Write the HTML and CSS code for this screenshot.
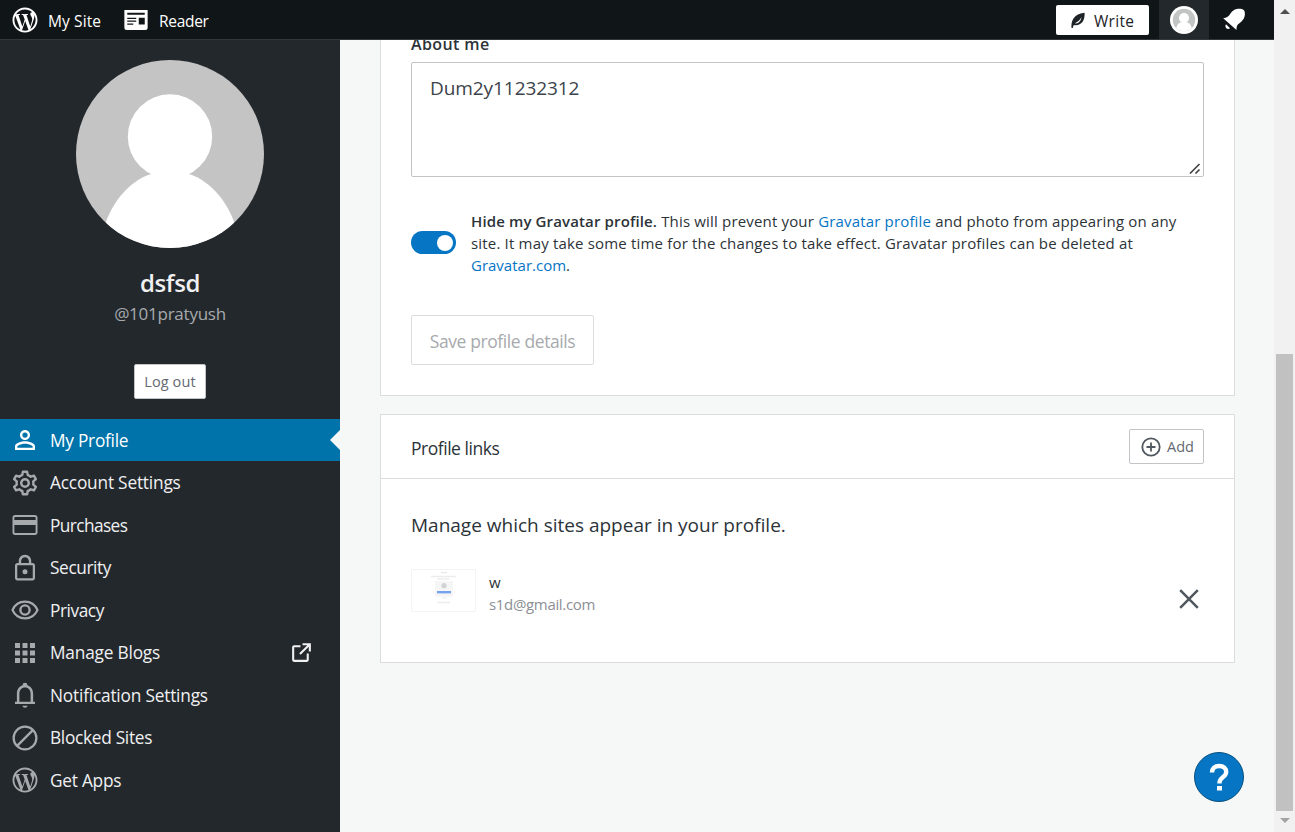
FILE: index.html
```html
<!DOCTYPE html>
<html lang="en">
<head>
<meta charset="utf-8">
<title>My Profile</title>
<link rel="stylesheet" href="styles.css">
</head>
<body>
<svg width="0" height="0" class="defs">
  <symbol id="wp" viewBox="0 0 24 24"><path d="M12 2C6.477 2 2 6.477 2 12s4.477 10 10 10 10-4.477 10-10S17.523 2 12 2zM3.500 12c0-1.232.264-2.402.736-3.459L8.291 19.650C5.456 18.272 3.500 15.365 3.500 12zm8.500 8.501c-.834 0-1.640-.123-2.400-.345l2.551-7.411 2.613 7.158c.017.042.038.080.061.117-.884.310-1.833.481-2.825.481zm1.172-12.486c.512-.027.973-.081.973-.081.458-.054.404-.727-.054-.701 0 0-1.377.108-2.266.108-.835 0-2.239-.108-2.239-.108-.459-.026-.512.674-.054.701 0 0 .434.054.892.081l1.324 3.629-1.860 5.579-3.096-9.208c.512-.027.973-.081.973-.081.458-.054.403-.727-.055-.701 0 0-1.376.108-2.265.108-.160 0-.347-.004-.547-.010C6.418 5.025 9.030 3.500 12 3.500c2.213 0 4.228.846 5.740 2.232-.037-.002-.072-.007-.110-.007-.835 0-1.427.727-1.427 1.509 0 .701.404 1.293.835 1.994.323.566.701 1.293.701 2.344 0 .727-.280 1.572-.647 2.748l-.848 2.833-3.072-9.138zm3.101 11.332l2.596-7.506c.485-1.213.646-2.182.646-3.045 0-.313-.021-.603-.057-.874.664 1.210 1.042 2.600 1.042 4.078 0 3.136-1.699 5.874-4.227 7.347z"/></symbol>
</svg>
<div class="window">
  <div class="app">
    <header class="masterbar">
      <a class="mb-item mb-site"><svg class="icon" viewBox="0 0 24 24"><use href="#wp"/></svg><span class="mb-text t-site">My Site</span></a>
      <a class="mb-item mb-reader"><svg class="icon" viewBox="0 0 24 24"><path fill-rule="evenodd" d="M2.700 4h18.600v14.300a1.700 1.700 0 0 1-1.700 1.700H4.400a1.700 1.700 0 0 1-1.700-1.700zM5 6.200v1.600h14V6.200zM5 10.200v1h7.200v-1zM5 12.400v1h7.200v-1zM5 14.700v1h4.800v-1zM14.200 10.200v5.300H19v-5.300z"/></svg><span class="mb-text t-reader">Reader</span></a>
      <div class="mb-space"></div>
      <a class="write"><svg class="quill" viewBox="0 0 14 17"><path d="M0.500 16C.1 9.500 1.800 2.200 13.600.8c.3 5.800-1.500 12.500-9.200 12.500-.9 0-1.400-.2-1.700-.3L1.700 16zM4 11.300c.8.300 2.400.1 3.600-.9 2.200-1.800 2.700-3.700 2.800-5.500-1.100 2.900-3.600 4.700-6.400 6.400z" fill-rule="evenodd"/></svg><span class="t-write">Write</span></a>
      <a class="mb-me"><svg class="me" viewBox="0 0 28 28"><circle cx="14" cy="14" r="14" fill="#fff"/><circle cx="14" cy="14" r="11.200" fill="#c3c4c4"/><circle cx="14" cy="12" r="5" fill="#fff"/><path d="M6.200 22a8 8 0 0 1 15.600 0A11.200 11.200 0 0 1 6.200 22z" fill="#fff"/></svg></a>
      <a class="mb-bell"><svg class="bell" viewBox="0 0 24 24"><path d="M1.200 10.300C5 9.700 6.500 8.500 8.500 5.500c3-4.800 7.500-5.300 11.200-4.600 1.800.4 2.500 1.200 2.900 2.700.9 4-.2 8.200-4.900 11.400-2.600 1.800-3.200 3.300-3.200 7.100zM4 16.200l4 4c-1 1.100-2.700 1-3.700 0s-1.200-2.900-.3-4z"/></svg></a>
    </header>
    <div class="layout">
      <aside class="sidebar">
        <div class="profile">
          <svg class="avatar" viewBox="0 0 188 188"><defs><clipPath id="round"><circle cx="94" cy="94" r="94"/></clipPath></defs><g clip-path="url(#round)"><path fill="#c4c4c4" d="M0 0h188v188H0z"/><circle cx="94" cy="76.500" r="42.200" fill="#fff"/><path d="M26 175c7-31 27-54 49-61h38c22 7 42 30 49 61v20H26z" fill="#fff"/></g></svg>
          <h2 class="name">dsfsd</h2>
          <div class="handle">@101pratyush</div>
          <button class="logout">Log out</button>
        </div>
        <nav class="menu">
          <a class="item active"><svg class="icon" viewBox="0 0 24 24"><path d="M12 4C9.800 4 8 5.800 8 8s1.800 4 4 4 4-1.800 4-4-1.800-4-4-4zm0 1.900a2.100 2.100 0 1 1 0 4.200 2.100 2.100 0 0 1 0-4.200zM12 13c-2.700 0-8 1.300-8 4v3h16v-3c0-2.700-5.300-4-8-4zm0 1.900c3 0 6.100 1.500 6.100 2.100v1.100H5.900V17c0-.6 3.100-2.100 6.100-2.100z"/></svg><span class="t1">My Profile</span></a>
          <a class="item"><svg class="icon line" viewBox="0 0 24 24"><path stroke-width="1.900" stroke-linejoin="round" d="M10.300 3h3.400l.5 2.600c.9.300 1.700.8 2.400 1.400l2.500-.9 1.600 2.800-2.100 1.800a7 7 0 0 1 0 2.600l2.100 1.800-1.600 2.800-2.500-.9c-.7.600-1.500 1.100-2.400 1.400l-.5 2.600h-3.400l-.5-2.600c-.9-.3-1.700-.8-2.400-1.400l-2.500.9-1.600-2.800 2.100-1.800a7 7 0 0 1 0-2.600L3.300 8.900l1.600-2.800 2.500.9c.7-.6 1.500-1.100 2.400-1.400z"/><circle cx="12" cy="12" r="3" stroke-width="2"/></svg><span class="t2">Account Settings</span></a>
          <a class="item"><svg class="icon" viewBox="0 0 24 24"><path fill-rule="evenodd" d="M20 4H4c-1.100 0-2 .9-2 2v12c0 1.100.9 2 2 2h16c1.100 0 2-.9 2-2V6c0-1.100-.9-2-2-2zM4 5.600h16c.3 0 .5.200.5.400v2h-17V6c0-.2.200-.4.500-.4zM20 18.400H4c-.3 0-.5-.2-.5-.4v-6h17v6c0 .2-.2.400-.5.400z"/></svg><span class="t3">Purchases</span></a>
          <a class="item"><svg class="icon" viewBox="0 0 24 24"><path fill-rule="evenodd" d="M18 8h-1V6.500C17 3.600 14.800 1.400 12 1.400S7 3.600 7 6.500V8H6c-1.100 0-2 .9-2 2v10c0 1.100.9 2 2 2h12c1.100 0 2-.9 2-2V10c0-1.100-.9-2-2-2zM8.900 6.500C8.900 4.700 10.200 3.300 12 3.300s3.100 1.400 3.100 3.200V8H8.900zM18.200 20.200H5.800V9.800h12.400z"/><circle cx="12" cy="15" r="2"/></svg><span class="t4">Security</span></a>
          <a class="item"><svg class="icon line" viewBox="0 0 24 24"><path stroke-width="1.700" d="M2 12c1.800-4 5.600-6.700 10-6.700S20.200 8 22 12c-1.800 4-5.600 6.700-10 6.700S3.800 16 2 12z"/><circle cx="12" cy="12" r="3.700" stroke-width="1.900"/></svg><span class="t5">Privacy</span></a>
          <a class="item"><svg class="icon" viewBox="0 0 24 24"><path d="M4 4h4v4H4zm6 0h4v4h-4zm6 0h4v4h-4zM4 10h4v4H4zm6 0h4v4h-4zm6 0h4v4h-4zM4 16h4v4H4zm6 0h4v4h-4zm6 0h4v4h-4z"/></svg><span class="t6">Manage Blogs</span><svg class="external" viewBox="0 0 24 24"><path d="M19 13v6c0 1.105-.895 2-2 2H5c-1.105 0-2-.895-2-2V7c0-1.105.895-2 2-2h6v2H5v12h12v-6h2zM13 3v2h4.586l-7.793 7.793 1.414 1.414L19 6.414V11h2V3h-8z"/></svg></a>
          <a class="item"><svg class="icon" viewBox="0 0 24 24"><path fill-rule="evenodd" d="M12 22.200a2.200 2.200 0 0 0 2.100-1.700H9.900a2.200 2.200 0 0 0 2.100 1.700zM18.500 17.300V11c0-3.400-1.800-5.900-4.600-6.800V4a1.900 1.900 0 0 0-3.800 0v.2C7.300 5.100 5.500 7.600 5.500 11v6.300H4v1.900h16v-1.900zM16.500 17.300h-9V11c0-3 1.800-5.100 4.500-5.100s4.500 2.100 4.500 5.100z"/></svg><span class="t7">Notification Settings</span></a>
          <a class="item"><svg class="icon line" viewBox="0 0 24 24"><circle cx="12" cy="12" r="9.100" stroke-width="1.800"/><path stroke-width="1.800" d="M5.500 18.500l13-13"/></svg><span class="t8">Blocked Sites</span></a>
          <a class="item"><svg class="icon" viewBox="0 0 24 24"><use href="#wp"/></svg><span class="t9">Get Apps</span></a>
        </nav>
      </aside>
      <main class="content">
        <section class="card details">
          <label class="label"><span class="t-about">About me</span></label>
          <div class="textarea"><span class="t-dum">Dum2y11232312</span><svg class="grip" viewBox="0 0 12 12"><path d="M1 10.500L10.500 1M6.500 10.500l4-4" stroke="#444" stroke-width="1.700"/></svg></div>
          <div class="toggle-row">
            <span class="toggle"></span>
            <p class="hint"><span class="h1"><strong>Hide my Gravatar profile.</strong> This will prevent your <a>Gravatar profile</a> and photo from appearing on any</span><br><span class="h2">site. It may take some time for the changes to take effect. Gravatar profiles can be deleted at</span><br><span class="h3"><a>Gravatar.com</a>.</span></p>
          </div>
          <button class="save">Save profile details</button>
        </section>
        <section class="card links">
          <div class="links-head"><span class="t-links">Profile links</span>
            <button class="add"><svg class="plus" viewBox="0 0 20 20"><circle cx="10" cy="10" r="8.700"/><path d="M10 5.500v9M5.500 10h9"/></svg><span class="t-add">Add</span></button>
          </div>
          <div class="links-body">
            <p class="manage">Manage which sites appear in your profile.</p>
            <div class="link-row">
              <svg class="thumb" viewBox="0 0 65 43"><path fill="#fff" stroke="#f4f4f4" d="M.5.500h64v42H.5z"/><path stroke="#e2e2e2" d="M30 3.700h6M26.500 10h12M30 33.500h6"/><path stroke="#ececec" stroke-width="1.400" d="M20 7.500h25M26 33.500h13"/><path fill="#f6f6f6" d="M24 12h18v16H24z"/><circle cx="33" cy="16.700" r="2.600" fill="#d2d2d2"/><path fill="#78a2ed" d="M26 22h14v2.400H26z"/><path stroke="#e7eefa" d="M31 29h5"/></svg>
              <div class="link-text"><span class="t-w">w</span><span class="mail">s1d@gmail.com</span></div>
              <svg class="close" viewBox="0 0 20 20"><path d="M1.200 1.200l17.600 17.600M18.800 1.200L1.200 18.800"/></svg>
            </div>
          </div>
        </section>
      </main>
    </div>
    <button class="help"><svg viewBox="0 0 50 50"><path d="M18 20.500c0-4.200 2.900-6.500 7.200-6.500 4.400 0 7 2.500 7 5.900 0 5.200-6.700 5.400-6.700 10.900v.7" fill="none" stroke="#fff" stroke-width="4.400"/><path fill="#fff" d="M23 34h5v4.500h-5z"/></svg></button>
  </div>
  <div class="scrollbar"><i class="up"></i><i class="handle-bar"></i><i class="down"></i></div>
</div>
</body>
</html>
```
FILE: styles.css
```css
* { box-sizing: border-box; }
body { margin: 0; font-family: "Open Sans", "Noto Sans", sans-serif; color: #2c3338; overflow: hidden; }
button { font-family: inherit; padding: 0; }
svg { display: block; flex: none; }
span { white-space: nowrap; }
.defs { position: absolute; }
.window { display: flex; width: 1295px; height: 832px; }
.app { position: relative; width: 1274px; height: 832px; background: #f6f7f7; display: flex; flex-direction: column; }

.masterbar { position: relative; z-index: 1; height: 40px; flex: none; background: #101517; border-bottom: 1px solid #333739; display: flex; align-items: center; color: #fff; fill: #fff; font-size: 15.500px; }
.mb-item { display: flex; align-items: center; }
.icon { width: 30px; height: 30px; }
.mb-site { padding-left: 10px; width: 121px; gap: 8px; }
.mb-reader { gap: 8px; }
.mb-text { padding-top: 2px; }
.t-site { letter-spacing: .1px; }
.t-reader { letter-spacing: -.3px; }
.t-write { letter-spacing: .3px; }
.mb-space { flex: 1; }
.write { width: 93px; height: 30px; background: #fff; border-radius: 2px; color: #1d2327; fill: #1d2327; display: flex; align-items: center; padding: 2px 0 0 15px; gap: 9px; }
.quill { width: 14px; height: 17px; }
.mb-me { width: 50px; height: 39px; margin-left: 10px; background: #23282d; display: flex; align-items: center; justify-content: center; }
.me { width: 28px; height: 28px; margin-top: 1px; }
.mb-bell { width: 65px; padding-left: 13px; }
.bell { width: 24px; height: 24px; margin-top: 1px; }

.layout { display: flex; flex: 1; min-height: 0; }
.sidebar { width: 340px; flex: none; background: #23282d; }
.profile { height: 379px; padding-top: 20px; display: flex; flex-direction: column; align-items: center; }
.avatar { width: 188px; height: 188px; }
.name { margin: 18px 0 0; font-size: 24px; line-height: 34px; font-weight: 600; color: #f0f0f1; letter-spacing: -.4px; }
.handle { margin-top: 1px; font-size: 17px; line-height: 26px; color: #a7aaad; letter-spacing: -.25px; }
.logout { margin-top: 37px; width: 72px; height: 35px; background: #fff; border: 1px solid #c3c4c7; border-radius: 2px; font-size: 14.500px; color: #646970; letter-spacing: .1px; }
.menu { display: flex; flex-direction: column; }
.item { height: 42.500px; display: flex; align-items: center; padding-left: 10px; gap: 10px; color: #f0f0f1; fill: #a7aaad; font-size: 17.300px; line-height: 24px; letter-spacing: -.2px; }
.item > span { padding-top: 1px; }
.item.active { height: 42px; margin-bottom: .5px; background: #0073aa; color: #fff; fill: #fff; position: relative; }
.item.active::after { content: ""; position: absolute; right: 0; top: 11px; border: 10px solid transparent; border-right-color: #f6f7f7; border-left-width: 0; }
.t1 { letter-spacing: -.25px; }
.t3 { letter-spacing: -.6px; }
.t4 { letter-spacing: -.4px; }
.t5 { letter-spacing: -.45px; }
.t8 { letter-spacing: -.3px; }
.t9 { letter-spacing: -.25px; }
.line { fill: none; stroke: #a7aaad; }
.external { width: 25px; height: 25px; margin: 0 26px 0 auto; fill: #f0f0f1; }

.content { padding-left: 40px; flex: 1; }
.card { width: 855px; background: #fff; border: 1px solid #dcdcde; }
.details { height: 356px; border-top: 0; padding-left: 30px; }
.label { display: flex; align-items: flex-end; height: 22px; font-size: 16px; font-weight: 600; padding-bottom: 7px; }
.t-about { line-height: 22px; letter-spacing: .4px; }
.textarea { position: relative; width: 793px; height: 115px; border: 1px solid #c3c4c7; border-radius: 2px; padding: 11px 18px; font-size: 19px; line-height: 28px; color: #3c434a; letter-spacing: -.07px; }
.grip { position: absolute; right: 2px; bottom: 1px; width: 12px; height: 12px; }
.toggle-row { display: flex; margin-top: 33px; gap: 15px; }
.toggle { width: 45px; height: 23px; margin-top: 21px; border-radius: 12px; background: #0675c4; padding: 4px 3px; display: flex; justify-content: flex-end; }
.toggle::after { content: ""; width: 16px; height: 16px; border-radius: 50%; background: #fff; }
.hint { margin: 0; font-size: 15px; line-height: 22px; letter-spacing: .17px; }
.h2 { letter-spacing: .18px; }
.h3 { letter-spacing: 0; }
.hint strong { font-weight: 600; letter-spacing: .13px; }
.hint a { color: #0675c4; }
.save { display: block; margin-top: 39px; width: 183px; height: 50px; background: #fff; border: 1px solid #dcdcde; border-radius: 2px; font-size: 17.500px; color: #a7aaad; padding-top: 2px; letter-spacing: -.4px; }
.links { margin-top: 18px; height: 249px; }
.links-head { height: 64px; border-bottom: 1px solid #dcdcde; display: flex; align-items: center; justify-content: space-between; padding: 0 30px; font-size: 17.500px; }
.t-links { padding-top: 2px; letter-spacing: -.47px; }
.add { width: 75px; height: 35px; background: #fff; border: 1px solid #c3c4c7; border-radius: 2px; display: flex; align-items: center; padding-left: 11px; gap: 6px; font-size: 14.500px; color: #646970; }
.plus { width: 20px; height: 20px; fill: none; stroke: #50575e; stroke-width: 1.800; }
.links-body { padding: 32px 30px 0; }
.manage { margin: 0; font-size: 19px; line-height: 28px; white-space: nowrap; }
.link-row { display: flex; margin-top: 30px; }
.thumb { width: 65px; height: 43px; }
.link-text { display: flex; flex-direction: column; margin: 2px 0 0 13px; font-size: 15px; line-height: 22px; }
.mail { color: #8c8f94; letter-spacing: -.33px; }
.close { width: 20px; height: 20px; margin: 20px 5px 0 auto; stroke: #50575e; stroke-width: 2.500; }
.help { position: absolute; left: 1194px; top: 752px; width: 50px; height: 50px; border: 1px solid #07517f; border-radius: 50%; background: #0675c4; }
.help svg { width: 50px; height: 50px; margin: -1px; }

.scrollbar { width: 21px; height: 832px; background: #f1f1f1; display: flex; flex-direction: column; padding-left: 2px; }
.up { margin: 9px 0 0 4px; width: 0; border: 5px solid transparent; border-top-width: 0; border-bottom-color: #505050; }
.handle-bar { margin-top: 340px; width: 17px; height: 457px; background: #c1c1c1; }
.down { margin: 7px 0 0 4px; width: 0; border: 5px solid transparent; border-bottom-width: 0; border-top-color: #a3a3a3; }
```
